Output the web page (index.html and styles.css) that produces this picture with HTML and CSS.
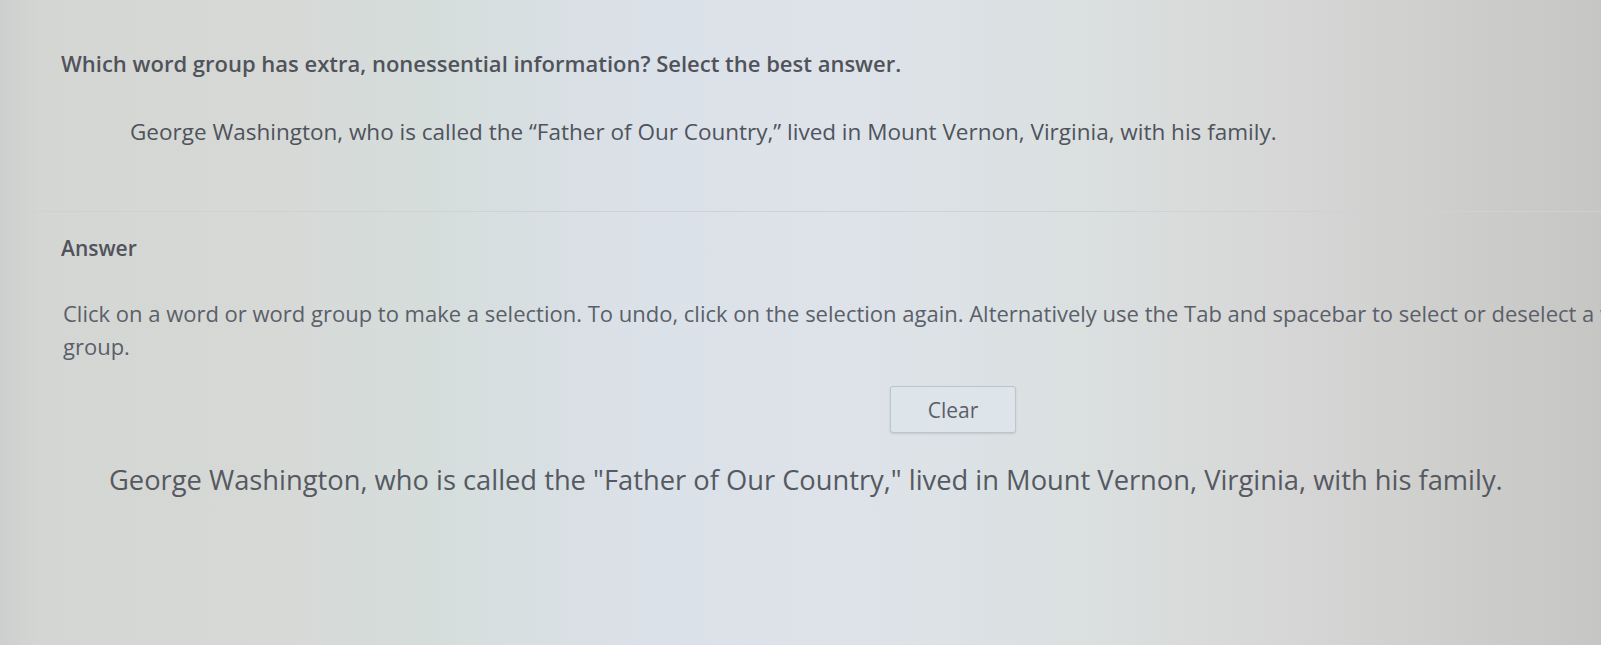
FILE: index.html
```html
<!DOCTYPE html>
<html>
<head>
<meta charset="utf-8">
<link rel="stylesheet" href="styles.css">
</head>
<body>
<div class="screen">
  <section class="question">
    <p class="prompt">Which word group has extra, nonessential information? Select the best answer.</p>
    <p class="passage">George Washington, who is called the “Father of Our Country,” lived in Mount Vernon, Virginia, with his family.</p>
  </section>
  <section class="answer">
    <h2 class="answer-title">Answer</h2>
    <p class="instructions">Click on a word or word group to make a selection. To undo, click on the selection again. Alternatively use the Tab and spacebar to select or deselect a word group.</p>
    <div class="actions"><button class="clear-btn">Clear</button></div>
    <p class="selectable">George Washington, who is called the "Father of Our Country," lived in Mount Vernon, Virginia, with his family.</p>
  </section>
</div>
</body>
</html>
```
FILE: styles.css
```css
html, body {
  margin: 0;
  padding: 0;
  width: 1601px;
  height: 645px;
  overflow: hidden;
}
body {
  font-family: "Open Sans", "Liberation Sans", sans-serif;
  background: linear-gradient(90deg, #cdcfce 0%, #d4d6d4 2.5%, #d7d9d7 18%, #d5dddb 26%, #dbe1e8 40%, #dde3e9 52%, #dbe1e2 65%, #d9dbda 75%, #d0d0cf 88%, #c6c7c5 100%);
  color: #4d5058;
}
.screen {
  width: 1700px;
  padding-left: 61px;
  box-sizing: border-box;
}
.question {
  padding-top: 48px;
  padding-bottom: 64px;
  border-bottom: 1px solid #ccd2d6;
  margin-left: -31px;
  padding-left: 31px;
}
.prompt {
  margin: 0;
  font-size: 22px;
  font-weight: 600;
  color: #50535b;
  line-height: 30px;
}
.passage {
  margin: 39px 0 0 69px;
  font-size: 22.5px;
  font-weight: 400;
  color: #4f535c;
  line-height: 30px;
}
.answer {
  padding-top: 21px;
}
.answer-title {
  margin: 0;
  font-size: 21px;
  font-weight: 600;
  color: #50535b;
  line-height: 30px;
}
.instructions {
  margin: 34px 0 0 2px;
  font-size: 22px;
  color: #5b5f69;
  line-height: 33px;
  width: 1630px;
}
.actions {
  display: flex;
  justify-content: flex-start;
  margin-top: 23px;
  padding-left: 829px;
}
.clear-btn {
  width: 126px;
  height: 47px;
  font-family: "Open Sans", "Liberation Sans", sans-serif;
  font-size: 21px;
  color: #5a5e68;
  background: #dde4ea;
  border: 1px solid #bac6cd;
  border-radius: 3px;
  box-shadow: 0 1px 2px rgba(120,130,140,0.25);
}
.selectable {
  margin: 30px 0 0 48px;
  font-size: 27.3px;
  color: #555962;
  line-height: 34px;
}
```
